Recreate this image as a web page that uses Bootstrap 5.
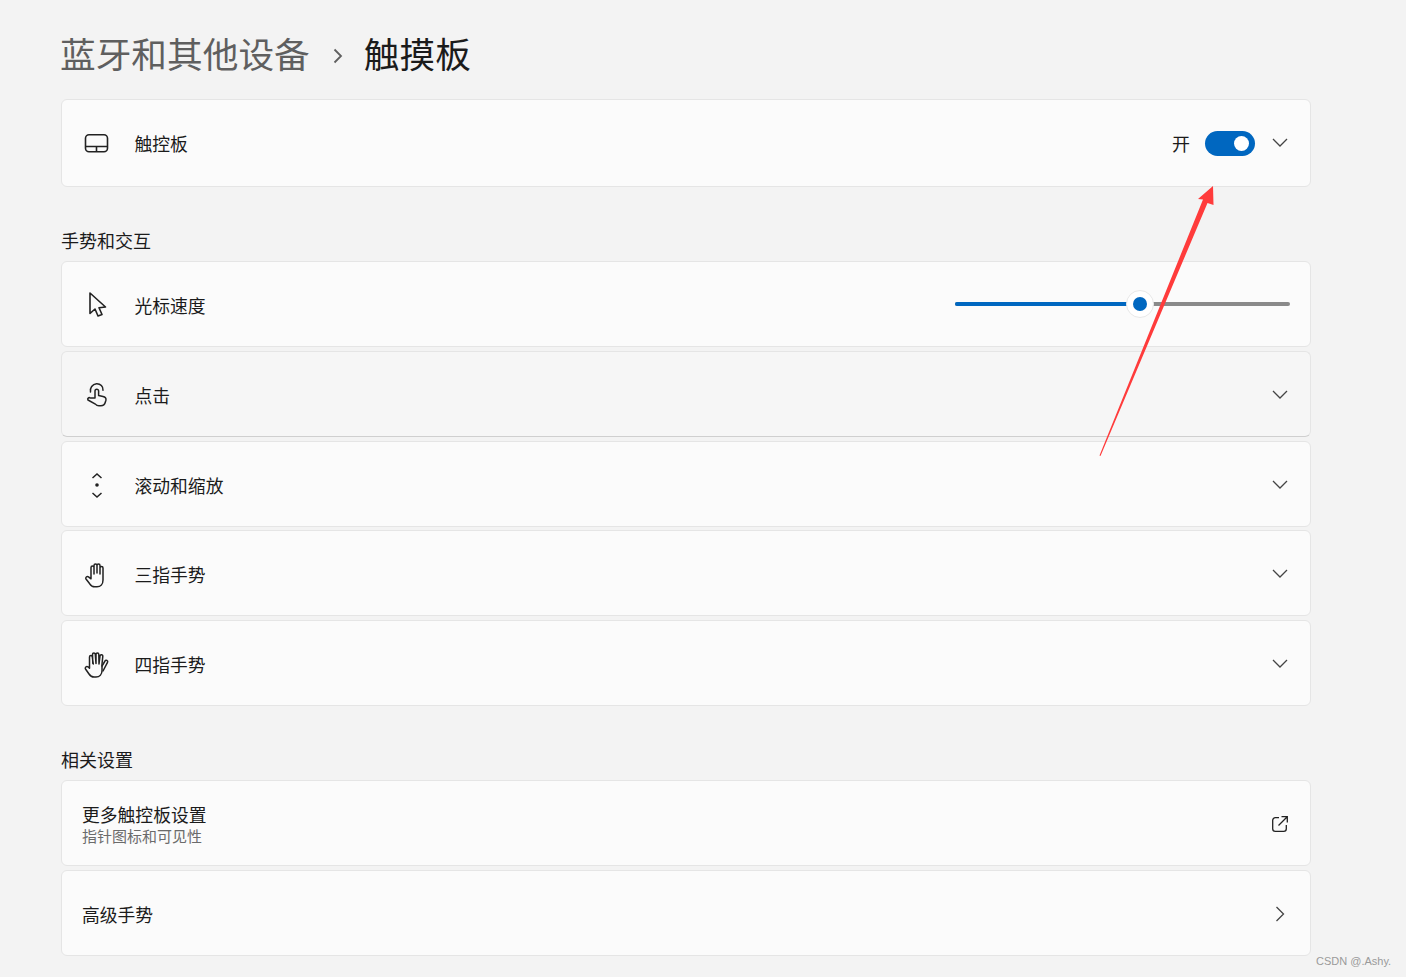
<!DOCTYPE html>
<html lang="zh-CN">
<head>
    <meta charset="UTF-8">
    <title>触摸板</title>
    <link href="https://cdn.jsdelivr.net/npm/bootstrap@5.3.0/dist/css/bootstrap.min.css" rel="stylesheet">
    <style>
        body {
            background: #f3f3f3;
            color: #1b1b1b;
            font-family: "Liberation Sans", "Noto Sans CJK SC", sans-serif;
            min-height: 977px;
        }
        .page-wrap { width: 1250px; margin-left: 61px; padding-top: 30px; }
        .page-title { height: 48px; padding-top: 4px; margin-bottom: 21px; font-size: 35.7px; line-height: 44px; font-weight: 400; gap: 23px; }
        .title-parent { color: #5f5f5f; margin-left: -1px; }
        .title-current { margin-left: -2px; }
        .section-title { font-size: 18px; line-height: 24px; margin: 43px 0 7px; font-weight: 400; }
        .set-list { gap: 3.75px; }
        .set-row {
            --bs-card-bg: #fbfbfb;
            --bs-card-border-color: #e5e5e5;
            --bs-card-border-radius: 6px;
            height: 86px;
            padding: 0 22px 0 20px;
        }
        .set-row.tall { height: 88px; }
        .set-row.hovered { --bs-card-bg: #f6f6f6; border-bottom-color: #cfcfcf; }
        .row-icon { width: 30px; height: 30px; margin-right: 22.5px; flex-shrink: 0; }
        .row-icon svg, .row-end svg { display: block; }
        .row-end { margin-top: 2px; }
        .row-end.slider-end { margin-top: 0; }
        .tall .row-end { margin-top: 0; }
        .row-label { font-size: 17.8px; line-height: 24px; margin-top: 6px; }
        .tall .row-label { margin-top: 4px; }
        .row-sub { font-size: 15px; line-height: 18px; margin-top: 2px; color: #6b6b6b; }
        .text-block { margin-top: 5px; }
        .text-block .row-label { margin-top: 0; line-height: 20px; }
        .on-text { font-size: 18px; line-height: 24px; margin-top: 4px; margin-right: 15px; }
        .toggle-pill { width: 50px; height: 25px; border-radius: 13px; background: #0067c0; padding-right: 6px; margin-right: 17px; }
        .toggle-knob { width: 15px; height: 15px; border-radius: 50%; background: #fff; }
        .speed-track { width: 335px; height: 4px; border-radius: 2px; background: #8a8a8a; position: relative; margin-right: -2px; }
        .speed-fill { height: 4px; border-radius: 2px 0 0 2px; background: #0067c0; }
        .speed-thumb {
            position: absolute; top: -12px; width: 28px; height: 28px; border-radius: 50%;
            background: #fff; border: 1px solid #e8e8e8;
        }
        .speed-dot { width: 14px; height: 14px; border-radius: 50%; background: #0067c0; }
        .arrow-over { position: absolute; left: 0; top: 0; pointer-events: none; }
        .water-mark { position: absolute; left: 1316px; top: 954px; font: 11px/14px "Liberation Sans", sans-serif; color: #9a9a9a; }
    </style>
</head>
<body>
    <div class="page-wrap">
        <h1 class="page-title d-flex align-items-center">
            <span class="title-parent">蓝牙和其他设备</span>
            <svg width="10" height="16" viewBox="0 0 10 16" fill="none" stroke="#5f5f5f" stroke-width="1.8"><path d="M1.500 1.500 8 8l-6.500 6.500"/></svg>
            <span class="title-current">触摸板</span>
        </h1>

        <div class="card set-row tall flex-row align-items-center">
            <div class="row-icon">
                <svg width="30" height="30" viewBox="0 0 30 30" fill="none" stroke="#222" stroke-width="1.600"><rect x="3.500" y="6.800" width="22" height="17" rx="3.500"/><path d="M3.500 18.500h22M14.500 18.500v5"/></svg>
            </div>
            <span class="row-label">触控板</span>
            <div class="row-end ms-auto d-flex align-items-center">
                <span class="on-text">开</span>
                <div class="toggle-pill d-flex align-items-center justify-content-end"><div class="toggle-knob"></div></div>
                <svg width="16" height="10" viewBox="0 0 16 10" fill="none" stroke="#444" stroke-width="1.300"><path d="M1 1l7 7 7-7"/></svg>
            </div>
        </div>

        <h2 class="section-title">手势和交互</h2>
        <div class="set-list d-flex flex-column">
            <div class="card set-row flex-row align-items-center">
                <div class="row-icon">
                    <svg width="30" height="30" viewBox="0 0 30 30" fill="none" stroke="#222" stroke-width="1.600" stroke-linejoin="round"><path d="M8 4v20.500l5-4.500 3 7 4-1.500-3-6.800 6.500-.7z"/></svg>
                </div>
                <span class="row-label">光标速度</span>
                <div class="row-end slider-end ms-auto">
                    <div class="speed-track">
                        <div class="speed-fill" style="width: 172px"></div>
                        <div class="speed-thumb d-flex align-items-center justify-content-center" style="left: 171px"><div class="speed-dot"></div></div>
                    </div>
                </div>
            </div>

            <div class="card set-row hovered flex-row align-items-center">
                <div class="row-icon">
                    <svg width="30" height="30" viewBox="0 0 30 30" fill="none" stroke="#222" stroke-width="1.500" stroke-linejoin="round" stroke-linecap="round"><path d="M8.500 13a6.800 6.800 0 0 1 6-8.200c4-.2 6.800 2.800 6.500 6.400"/><path d="M13 19v-7a1.800 1.800 0 0 1 3.600 0v4.500l4.400 1c2.200.5 3.400 1.800 2.900 3.800l-.6 2c-.5 2-2.400 3.500-4.400 3.500h-2c-1.600 0-2.700-.7-3.500-1.700L6 21c-1-1.500.8-3 2.300-2z"/></svg>
                </div>
                <span class="row-label">点击</span>
                <div class="row-end ms-auto">
                    <svg width="16" height="10" viewBox="0 0 16 10" fill="none" stroke="#444" stroke-width="1.300"><path d="M1 1l7 7 7-7"/></svg>
                </div>
            </div>

            <div class="card set-row flex-row align-items-center">
                <div class="row-icon">
                    <svg width="30" height="30" viewBox="0 0 30 30" fill="none" stroke="#222" stroke-width="1.500"><path d="M10.500 9 15 5l4.500 4M10.500 24l4.500 4 4.500-4"/><circle cx="15" cy="16" r="1.800" fill="#222" stroke="none"/></svg>
                </div>
                <span class="row-label">滚动和缩放</span>
                <div class="row-end ms-auto">
                    <svg width="16" height="10" viewBox="0 0 16 10" fill="none" stroke="#444" stroke-width="1.300"><path d="M1 1l7 7 7-7"/></svg>
                </div>
            </div>

            <div class="card set-row flex-row align-items-center">
                <div class="row-icon">
                    <svg width="30" height="30" viewBox="0 0 30 30" fill="none" stroke="#222" stroke-width="1.500" stroke-linejoin="round" stroke-linecap="round"><path d="M9 20.500V9.500a1.500 1.500 0 0 1 3 0V16M12 15V7.500a1.500 1.500 0 0 1 3 0V15M15 15V7.500a1.500 1.500 0 0 1 3 0V16M18 15.500V10a1.500 1.500 0 0 1 3 0v12c0 4-2.500 6.800-6 6.800h-2.300c-2.200 0-3.700-1-5-3L4 21c-1-1.500 1-3.200 2.500-2.200l2.500 2"/></svg>
                </div>
                <span class="row-label">三指手势</span>
                <div class="row-end ms-auto">
                    <svg width="16" height="10" viewBox="0 0 16 10" fill="none" stroke="#444" stroke-width="1.300"><path d="M1 1l7 7 7-7"/></svg>
                </div>
            </div>

            <div class="card set-row flex-row align-items-center">
                <div class="row-icon">
                    <svg width="30" height="30" viewBox="0 0 30 30" fill="none" stroke="#222" stroke-width="1.500" stroke-linejoin="round" stroke-linecap="round"><path d="M7.500 20V9a1.400 1.400 0 0 1 2.800 0l1 7M10.800 15.500 10.500 6.500a1.400 1.400 0 0 1 2.800 0l.7 9M14 15.500V6.500a1.400 1.400 0 0 1 2.800 0l.2 9.500M17 16l1-8a1.400 1.400 0 0 1 2.800.3L20 16v6.500c0 4-2.500 6.500-6 6.500h-2c-2.200 0-3.700-1-5-3L3.500 21c-1-1.500 1-3.200 2.500-2.200l1.500 1.500"/><path d="M20 18l3-5a1.400 1.400 0 0 1 2.500 1.300L21 23"/></svg>
                </div>
                <span class="row-label">四指手势</span>
                <div class="row-end ms-auto">
                    <svg width="16" height="10" viewBox="0 0 16 10" fill="none" stroke="#444" stroke-width="1.300"><path d="M1 1l7 7 7-7"/></svg>
                </div>
            </div>
        </div>

        <h2 class="section-title">相关设置</h2>
        <div class="set-list d-flex flex-column">
            <div class="card set-row flex-row align-items-center">
                <div class="text-block">
                    <div class="row-label">更多触控板设置</div>
                    <div class="row-sub">指针图标和可见性</div>
                </div>
                <div class="row-end ms-auto">
                    <svg width="16" height="16" viewBox="0 0 16 16" fill="none" stroke="#222" stroke-width="1.300"><path d="M7 1.700H3.300A2.600 2.600 0 0 0 .7 4.300v8.400a2.600 2.600 0 0 0 2.600 2.600h8.400a2.600 2.600 0 0 0 2.600-2.600V9"/><path d="M6.500 9.500 15 1M9.500.7h5.800v5.800"/></svg>
                </div>
            </div>
            <div class="card set-row flex-row align-items-center">
                <span class="row-label">高级手势</span>
                <div class="row-end ms-auto">
                    <svg width="16" height="16" viewBox="0 0 16 16" fill="none" stroke="#444" stroke-width="1.300"><path d="M4.500 1l7 7-7 7"/></svg>
                </div>
            </div>
        </div>
    </div>

    <svg class="arrow-over" width="1406" height="977" viewBox="0 0 1406 977"><path d="M1213 186l.5 19-6-2L1100.500 456l-1-.5L1203 199.500l-5-.5z" fill="#ff3b3b"/></svg>
    <div class="water-mark">CSDN @.Ashy.</div>

    <script src="https://cdn.jsdelivr.net/npm/bootstrap@5.3.0/dist/js/bootstrap.bundle.min.js"></script>
</body>
</html>
